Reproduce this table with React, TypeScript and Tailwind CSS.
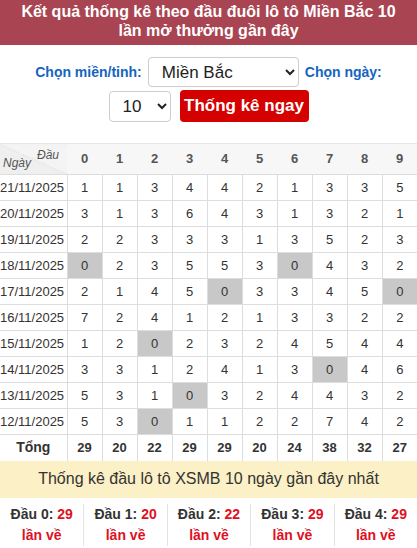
import React from "react";

const rows: { date: string; vals: number[] }[] = [
  { date: "21/11/2025", vals: [1, 1, 3, 4, 4, 2, 1, 3, 3, 5] },
  { date: "20/11/2025", vals: [3, 1, 3, 6, 4, 3, 1, 3, 2, 1] },
  { date: "19/11/2025", vals: [2, 2, 3, 3, 3, 1, 3, 5, 2, 3] },
  { date: "18/11/2025", vals: [0, 2, 3, 5, 5, 3, 0, 4, 3, 2] },
  { date: "17/11/2025", vals: [2, 1, 4, 5, 0, 3, 3, 4, 5, 0] },
  { date: "16/11/2025", vals: [7, 2, 4, 1, 2, 1, 3, 3, 2, 2] },
  { date: "15/11/2025", vals: [1, 2, 0, 2, 3, 2, 4, 5, 4, 4] },
  { date: "14/11/2025", vals: [3, 3, 1, 2, 4, 1, 3, 0, 4, 6] },
  { date: "13/11/2025", vals: [5, 3, 1, 0, 3, 2, 4, 4, 3, 2] },
  { date: "12/11/2025", vals: [5, 3, 0, 1, 1, 2, 2, 7, 4, 2] },
];

const totals = [29, 20, 22, 29, 29, 20, 24, 38, 32, 27];

export default function App() {
  return (
    <div className="w-[417px] h-[548px] overflow-hidden bg-white font-['Liberation_Sans',Arial,sans-serif] text-[#333]">
      {/* Title */}
      <div className="h-[45px] bg-[#a94452] px-2 pt-[2px] text-center text-[16px] font-bold leading-[19px] text-white">
        Kết quả thống kê theo đầu đuôi lô tô Miền Bắc 10
        <br />
        lần mở thưởng gần đây
      </div>

      {/* Controls */}
      <div className="flex flex-col items-center pt-[12px]">
        <div className="flex items-center gap-[6px]">
          <span className="text-[14px] font-bold text-[#1565c0]">Chọn miền/tỉnh:</span>
          <select
            defaultValue="mb"
            className="h-[30px] w-[151px] rounded-[4px] border border-[#ccc] bg-white pl-[9px] text-[17px] text-[#222]"
          >
            <option value="mb">Miền Bắc</option>
          </select>
          <span className="text-[14px] font-bold text-[#1565c0]">Chọn ngày:</span>
        </div>
        <div className="mt-[3px] flex items-center gap-[9px]">
          <select
            defaultValue="10"
            className="h-[31px] w-[62px] rounded-[4px] border border-[#ccc] bg-white pl-[9px] text-[17px] text-[#222]"
          >
            <option value="10">10</option>
          </select>
          <button className="h-[32px] w-[129px] rounded-[4px] bg-[#d50000] text-[17px] font-bold text-white">
            Thống kê ngay
          </button>
        </div>
      </div>

      {/* Table */}
      <table className="mt-[21px] w-[417px] table-fixed border-collapse text-center text-[13px]">
        <colgroup>
          <col className="w-[67px]" />
          {totals.map((_, i) => (
            <col key={i} />
          ))}
        </colgroup>
        <thead>
          <tr className="h-[31px] border-t border-[#e6e6e6] bg-[#f7f7f7]">
            <th className="relative bg-[linear-gradient(to_top_right,#efefef_49.5%,#d8d8d8_50%,#f4f4f4_51%)] p-0 font-normal italic text-[#555]">
              <span className="absolute right-[8px] top-[2px] text-[12px]">Đầu</span>
              <span className="absolute bottom-[2px] left-[3px] text-[12px]">Ngày</span>
            </th>
            {totals.map((_, i) => (
              <th key={i} className="font-bold text-[#555]">
                {i}
              </th>
            ))}
          </tr>
        </thead>
        <tbody>
          {rows.map((r) => (
            <tr key={r.date} className="h-[26px] border-t border-[#ddd]">
              <td className="whitespace-nowrap p-0 text-left text-[13px]">{r.date}</td>
              {r.vals.map((v, i) => (
                <td
                  key={i}
                  className={`border-l border-[#ddd] ${v === 0 ? "bg-[#c8c8c8]" : ""}`}
                >
                  {v}
                </td>
              ))}
            </tr>
          ))}
          <tr className="h-[26px] border-t border-[#ddd] font-bold">
            <td className="text-[14px]">Tổng</td>
            {totals.map((t, i) => (
              <td key={i} className="border-l border-[#ddd]">
                {t}
              </td>
            ))}
          </tr>
        </tbody>
      </table>

      {/* Summary */}
      <div className="flex h-[37px] items-center justify-center bg-[#fcf0c6] text-[16px] text-[#333]">
        Thống kê đầu lô tô XSMB 10 ngày gần đây nhất
      </div>
      <div className="grid grid-cols-5 pt-[6px]">
        {[0, 1, 2, 3, 4].map((d) => (
          <div
            key={d}
            className={`flex flex-col items-center text-[14px] font-bold leading-[21px] ${d > 0 ? "border-l border-[#e3e3e3]" : ""}`}
          >
            <span>
              Đầu {d}: <span className="text-[#e0101f]">{totals[d]}</span>
            </span>
            <span className="text-[#e0101f]">lần về</span>
          </div>
        ))}
      </div>
    </div>
  );
}
